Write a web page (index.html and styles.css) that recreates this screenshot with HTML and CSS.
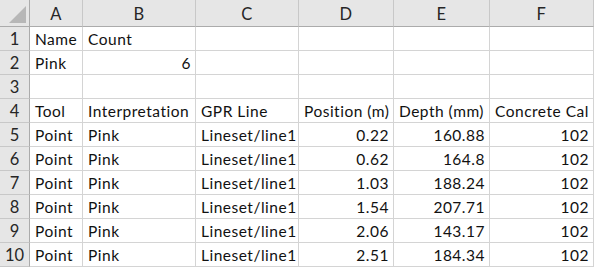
FILE: index.html
```html
<!DOCTYPE html>
<html>
<head>
<meta charset="utf-8">
<link rel="stylesheet" href="styles.css">
</head>
<body>
<div class="sheet">
  <div class="ch corner"><span class="tri"></span></div>
  <div class="ch">A</div><div class="ch">B</div><div class="ch">C</div><div class="ch">D</div><div class="ch">E</div><div class="ch">F</div>

  <div class="rh">1</div><div class="c">Name</div><div class="c">Count</div><div class="c"></div><div class="c"></div><div class="c"></div><div class="c"></div>
  <div class="rh">2</div><div class="c">Pink</div><div class="c n">6</div><div class="c"></div><div class="c"></div><div class="c"></div><div class="c"></div>
  <div class="rh">3</div><div class="c"></div><div class="c"></div><div class="c"></div><div class="c"></div><div class="c"></div><div class="c"></div>
  <div class="rh">4</div><div class="c">Tool</div><div class="c">Interpretation</div><div class="c">GPR Line</div><div class="c">Position (m)</div><div class="c">Depth (mm)</div><div class="c">Concrete Cal</div>
  <div class="rh">5</div><div class="c">Point</div><div class="c">Pink</div><div class="c">Lineset/line1</div><div class="c n">0.22</div><div class="c n">160.88</div><div class="c n">102</div>
  <div class="rh">6</div><div class="c">Point</div><div class="c">Pink</div><div class="c">Lineset/line1</div><div class="c n">0.62</div><div class="c n">164.8</div><div class="c n">102</div>
  <div class="rh">7</div><div class="c">Point</div><div class="c">Pink</div><div class="c">Lineset/line1</div><div class="c n">1.03</div><div class="c n">188.24</div><div class="c n">102</div>
  <div class="rh">8</div><div class="c">Point</div><div class="c">Pink</div><div class="c">Lineset/line1</div><div class="c n">1.54</div><div class="c n">207.71</div><div class="c n">102</div>
  <div class="rh">9</div><div class="c">Point</div><div class="c">Pink</div><div class="c">Lineset/line1</div><div class="c n">2.06</div><div class="c n">143.17</div><div class="c n">102</div>
  <div class="rh">10</div><div class="c">Point</div><div class="c">Pink</div><div class="c">Lineset/line1</div><div class="c n">2.51</div><div class="c n">184.34</div><div class="c n">102</div>
</div>
</body>
</html>
```

FILE: styles.css
```css
html, body {
  margin: 0;
  padding: 0;
  background: #ffffff;
}

.sheet {
  display: grid;
  grid-template-columns: 30px 53px 113px 103px 95px 96px 104px;
  grid-template-rows: 27px repeat(10, 24px);
  width: 594px;
  font-family: Lato, "Open Sans", sans-serif;
  font-size: 15.5px;
  letter-spacing: 0.5px;
  color: #111111;
}

.ch {
  background: #e6e6e6;
  border-right: 1px solid #c8c8c8;
  border-bottom: 1px solid #ababab;
  display: flex;
  align-items: center;
  justify-content: center;
  color: #262626;
  font-size: 16.5px;
  padding-top: 2px;
  box-sizing: border-box;
}

.corner {
  position: relative;
  border-right: 1px solid #ababab;
}

.tri {
  position: absolute;
  right: 3px;
  bottom: 3px;
  width: 0;
  height: 0;
  border-left: 17px solid transparent;
  border-bottom: 17px solid #b7b7b7;
}

.rh {
  background: #e6e6e6;
  border-right: 1px solid #ababab;
  border-bottom: 1px solid #c8c8c8;
  display: flex;
  align-items: center;
  justify-content: center;
  color: #262626;
  font-size: 16.5px;
  letter-spacing: 0;
  padding-top: 1px;
  box-sizing: border-box;
}

.c {
  border-right: 1px solid #d4d4d4;
  border-bottom: 1px solid #d4d4d4;
  display: flex;
  align-items: flex-end;
  justify-content: flex-start;
  padding: 0 4px 2px 5px;
  box-sizing: border-box;
  white-space: nowrap;
  overflow: hidden;
}

.n {
  justify-content: flex-end;
}
```
